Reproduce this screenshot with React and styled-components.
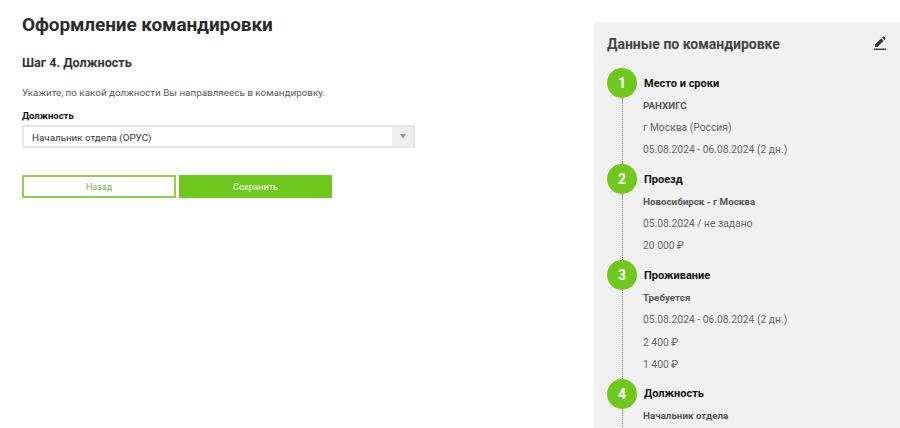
import React from "react";
import styled, { createGlobalStyle } from "styled-components";

const font = `Roboto, "Liberation Sans", sans-serif`;

const steps = [
  {
    title: "Место и сроки",
    strong: "РАНХИГС",
    lines: ["г Москва (Россия)", "05.08.2024 - 06.08.2024 (2 дн.)"],
  },
  {
    title: "Проезд",
    strong: "Новосибирск - г Москва",
    lines: ["05.08.2024 / не задано", "20 000 ₽"],
  },
  {
    title: "Проживание",
    strong: "Требуется",
    lines: ["05.08.2024 - 06.08.2024 (2 дн.)", "2 400 ₽", "1 400 ₽"],
  },
  { title: "Должность", strong: "Начальник отдела", lines: [] },
];

const App = () => {
  return (
    <Page>
      <GlobalStyle />
      <Main>
        <Title>Оформление командировки</Title>
        <StepTitle>Шаг 4. Должность</StepTitle>
        <Hint>Укажите, по какой должности Вы направляеесь в командировку.</Hint>
        <FieldLabel>Должность</FieldLabel>
        <Select>
          <SelectValue>Начальник отдела (ОРУС)</SelectValue>
          <SelectArrow />
        </Select>
        <Buttons>
          <BackButton>Назад</BackButton>
          <SaveButton>Сохранить</SaveButton>
        </Buttons>
      </Main>
      <Panel>
        <PanelHead>
          <PanelTitle>Данные по командировке</PanelTitle>
          <EditIcon viewBox="0 0 12 14">
            <path d="M1 11V8.6L7.2 2.4l2.4 2.4L3.4 11z" />
            <path d="M8 1.6l1-1c.3-.3.7-.3 1 0l1.4 1.4c.3.3.3.7 0 1l-1 1z" />
            <path d="M0 12.6h12V14H0z" />
          </EditIcon>
        </PanelHead>
        {steps.map((step, i) => (
          <Step key={step.title}>
            <Rail>
              <Circle>{i + 1}</Circle>
              <Dots />
            </Rail>
            <StepBody>
              <StepName>{step.title}</StepName>
              <StepStrong>{step.strong}</StepStrong>
              {step.lines.map((line) => (
                <StepLine key={line}>{line}</StepLine>
              ))}
            </StepBody>
          </Step>
        ))}
      </Panel>
    </Page>
  );
};

const GlobalStyle = createGlobalStyle`
  html, body {
    margin: 0;
    padding: 0;
    background: #fff;
    overflow: hidden;
  }
`;

const Page = styled.div`
  width: 900px;
  height: 428px;
  overflow: hidden;
  display: flex;
  justify-content: space-between;
  font-family: ${font};
`;

const Main = styled.div`
  width: 393px;
  margin-left: 22px;
  padding-top: 13px;
`;

const Title = styled.h1`
  margin: 0;
  font-size: 19px;
  line-height: 24px;
  font-weight: 700;
  letter-spacing: -0.1px;
  color: #2b2b2b;
`;

const StepTitle = styled.h2`
  margin: 17px 0 0;
  font-size: 12.6px;
  line-height: 18px;
  font-weight: 700;
  color: #333;
`;

const Hint = styled.p`
  margin: 13px 0 0;
  font-size: 9.87px;
  line-height: 16px;
  color: #555;
`;

const FieldLabel = styled.div`
  margin-top: 8px;
  font-size: 9.5px;
  line-height: 14px;
  font-weight: 700;
  color: #111;
`;

const Select = styled.div`
  margin-top: 2px;
  height: 23px;
  box-sizing: border-box;
  border: 2px solid #e6e6e6;
  display: flex;
  align-items: center;
  justify-content: space-between;
`;

const SelectValue = styled.span`
  padding: 1px 0 0 8px;
  font-size: 9.8px;
  color: #333;
`;

const SelectArrow = styled.span`
  width: 21px;
  height: 100%;
  background: #eee;
  display: flex;
  align-items: center;
  justify-content: center;
  &::after {
    content: "";
    border-left: 3px solid transparent;
    border-right: 3px solid transparent;
    border-top: 5px solid #999;
  }
`;

const Buttons = styled.div`
  margin-top: 27px;
  display: flex;
  gap: 3px;
`;

const BackButton = styled.button`
  width: 154px;
  height: 23px;
  box-sizing: border-box;
  padding: 0;
  border: 2px solid #8ed04f;
  background: #fff;
  color: #78b050;
  font-family: inherit;
  font-size: 9px;
`;

const SaveButton = styled.button`
  width: 153px;
  height: 23px;
  padding: 0;
  border: 0;
  background: #6fc91c;
  color: #fff;
  font-family: inherit;
  font-size: 9px;
`;

const Panel = styled.aside`
  width: 306px;
  margin-top: 22px;
  padding: 12px 14px 0 13px;
  box-sizing: border-box;
  background: #f1f1f1;
`;

const PanelHead = styled.div`
  height: 34px;
  display: flex;
  justify-content: space-between;
  align-items: flex-start;
`;

const PanelTitle = styled.div`
  font-size: 14px;
  line-height: 20px;
  font-weight: 700;
  color: #444;
`;

const EditIcon = styled.svg`
  width: 12px;
  height: 14px;
  margin-top: 2px;
  fill: #333;
`;

const Step = styled.div`
  display: flex;
  gap: 6px;
`;

const Rail = styled.div`
  width: 30px;
  flex: none;
  display: flex;
  flex-direction: column;
  align-items: center;
`;

const Circle = styled.div`
  width: 30px;
  height: 30px;
  flex: none;
  border-radius: 50%;
  background: #6fc91c;
  color: #fff;
  font-size: 14px;
  font-weight: 700;
  line-height: 30px;
  text-align: center;
`;

const Dots = styled.div`
  flex: 1;
  border-left: 1px dotted #888;
`;

const StepBody = styled.div`
  padding: 4.5px 0 2.4px;
  min-width: 0;
`;

const StepName = styled.div`
  padding-left: 1px;
  font-size: 11px;
  line-height: 22px;
  font-weight: 700;
  color: #111;
`;

const StepStrong = styled.div`
  font-size: 9.8px;
  line-height: 22.4px;
  font-weight: 700;
  color: #555;
`;

const StepLine = styled.div`
  font-size: 10.3px;
  line-height: 22.4px;
  color: #666;
`;

export default App;
